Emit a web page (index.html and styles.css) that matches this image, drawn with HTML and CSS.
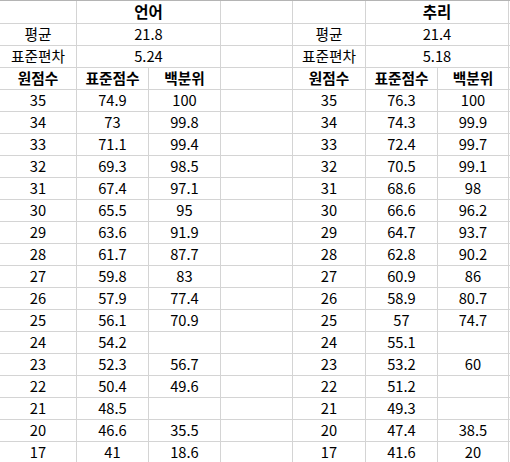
FILE: index.html
```html
<!DOCTYPE html>
<html lang="ko">
<head>
<meta charset="utf-8">
<link rel="stylesheet" href="styles.css">
</head>
<body>
<div class="sheet">
  <div class="c"></div><div class="c span2 b title">언어</div><div class="c"></div><div class="c"></div><div class="c span2 b title">추리</div><div class="c last"></div>
  <div class="c">평균</div><div class="c span2">21.8</div><div class="c"></div><div class="c">평균</div><div class="c span2">21.4</div><div class="c last"></div>
  <div class="c">표준편차</div><div class="c span2">5.24</div><div class="c"></div><div class="c">표준편차</div><div class="c span2">5.18</div><div class="c last"></div>
  <div class="c b">원점수</div><div class="c b">표준점수</div><div class="c b">백분위</div><div class="c"></div><div class="c b">원점수</div><div class="c b">표준점수</div><div class="c b">백분위</div><div class="c last"></div>
  <div class="c">35</div><div class="c">74.9</div><div class="c">100</div><div class="c"></div><div class="c">35</div><div class="c">76.3</div><div class="c">100</div><div class="c last"></div>
  <div class="c">34</div><div class="c">73</div><div class="c">99.8</div><div class="c"></div><div class="c">34</div><div class="c">74.3</div><div class="c">99.9</div><div class="c last"></div>
  <div class="c">33</div><div class="c">71.1</div><div class="c">99.4</div><div class="c"></div><div class="c">33</div><div class="c">72.4</div><div class="c">99.7</div><div class="c last"></div>
  <div class="c">32</div><div class="c">69.3</div><div class="c">98.5</div><div class="c"></div><div class="c">32</div><div class="c">70.5</div><div class="c">99.1</div><div class="c last"></div>
  <div class="c">31</div><div class="c">67.4</div><div class="c">97.1</div><div class="c"></div><div class="c">31</div><div class="c">68.6</div><div class="c">98</div><div class="c last"></div>
  <div class="c">30</div><div class="c">65.5</div><div class="c">95</div><div class="c"></div><div class="c">30</div><div class="c">66.6</div><div class="c">96.2</div><div class="c last"></div>
  <div class="c">29</div><div class="c">63.6</div><div class="c">91.9</div><div class="c"></div><div class="c">29</div><div class="c">64.7</div><div class="c">93.7</div><div class="c last"></div>
  <div class="c">28</div><div class="c">61.7</div><div class="c">87.7</div><div class="c"></div><div class="c">28</div><div class="c">62.8</div><div class="c">90.2</div><div class="c last"></div>
  <div class="c">27</div><div class="c">59.8</div><div class="c">83</div><div class="c"></div><div class="c">27</div><div class="c">60.9</div><div class="c">86</div><div class="c last"></div>
  <div class="c">26</div><div class="c">57.9</div><div class="c">77.4</div><div class="c"></div><div class="c">26</div><div class="c">58.9</div><div class="c">80.7</div><div class="c last"></div>
  <div class="c">25</div><div class="c">56.1</div><div class="c">70.9</div><div class="c"></div><div class="c">25</div><div class="c">57</div><div class="c">74.7</div><div class="c last"></div>
  <div class="c">24</div><div class="c">54.2</div><div class="c"></div><div class="c"></div><div class="c">24</div><div class="c">55.1</div><div class="c"></div><div class="c last"></div>
  <div class="c">23</div><div class="c">52.3</div><div class="c">56.7</div><div class="c"></div><div class="c">23</div><div class="c">53.2</div><div class="c">60</div><div class="c last"></div>
  <div class="c">22</div><div class="c">50.4</div><div class="c">49.6</div><div class="c"></div><div class="c">22</div><div class="c">51.2</div><div class="c"></div><div class="c last"></div>
  <div class="c">21</div><div class="c">48.5</div><div class="c"></div><div class="c"></div><div class="c">21</div><div class="c">49.3</div><div class="c"></div><div class="c last"></div>
  <div class="c">20</div><div class="c">46.6</div><div class="c">35.5</div><div class="c"></div><div class="c">20</div><div class="c">47.4</div><div class="c">38.5</div><div class="c last"></div>
  <div class="c">17</div><div class="c">41</div><div class="c">18.6</div><div class="c"></div><div class="c">17</div><div class="c">41.6</div><div class="c">20</div><div class="c last"></div>
</div>
</body>
</html>
```
FILE: styles.css
```css
html, body {
  margin: 0;
  padding: 0;
  background: #ffffff;
  overflow: hidden;
}
.sheet {
  display: grid;
  grid-template-columns: 77px 72px 72px 72px 73px 72px 71px 1fr;
  grid-template-rows: 23px;
  grid-auto-rows: 22px;
  width: 510px;
  border-top: 1px solid #b4b4b4;
  font-family: "Noto Sans CJK KR", "Noto Sans", sans-serif;
  font-size: 14.7px;
  color: #000000;
}
.c {
  box-sizing: border-box;
  border-right: 1px solid #d4d4d4;
  border-bottom: 1px solid #d4d4d4;
  display: flex;
  align-items: center;
  justify-content: center;
  line-height: 1;
  white-space: nowrap;
  overflow: hidden;
}
.c.last {
  border-right: none;
}
.span2 {
  grid-column: span 2;
}
.b {
  font-weight: bold;
}
.title {
  font-size: 15.5px;
}
```
